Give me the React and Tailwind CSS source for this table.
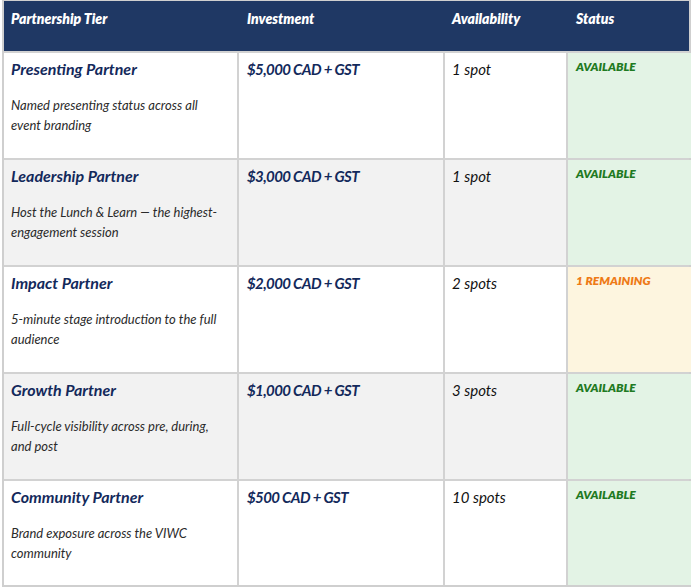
import React from 'react'

const rows = [
  { tier: 'Presenting Partner', desc: ['Named presenting status across all', 'event branding'], price: '$5,000 CAD + GST', spots: '1 spot', status: 'AVAILABLE', tone: 'green' },
  { tier: 'Leadership Partner', desc: ['Host the Lunch & Learn — the highest-', 'engagement session'], price: '$3,000 CAD + GST', spots: '1 spot', status: 'AVAILABLE', tone: 'green' },
  { tier: 'Impact Partner', desc: ['5-minute stage introduction to the full', 'audience'], price: '$2,000 CAD + GST', spots: '2 spots', status: '1 REMAINING', tone: 'amber' },
  { tier: 'Growth Partner', desc: ['Full-cycle visibility across pre, during,', 'and post'], price: '$1,000 CAD + GST', spots: '3 spots', status: 'AVAILABLE', tone: 'green' },
  { tier: 'Community Partner', desc: ['Brand exposure across the VIWC', 'community'], price: '$500 CAD + GST', spots: '10 spots', status: 'AVAILABLE', tone: 'green' },
]

const cols = 'grid grid-cols-[235px_206px_123px_123px]'

export default function App() {
  return (
    <div className="w-[693px] h-[587px] bg-white pl-[2px] font-['Lato',sans-serif] italic">
      <div className="w-[689px] border-2 border-[#cfcfcf] border-t-[1px]">
        <div className={`${cols} h-[50px] bg-[#1f3864] text-white font-extrabold text-[14px]`}>
          <div className="pl-[7px] pt-[7px]">Partnership Tier</div>
          <div className="pl-[8px] pt-[7px]">Investment</div>
          <div className="pl-[7px] pt-[7px]">Availability</div>
          <div className="pl-[8px] pt-[7px]">Status</div>
        </div>
        {rows.map((r, i) => (
          <div key={r.tier} className={`${cols} ${i === 4 ? 'h-[106px]' : 'h-[107px]'} border-t-2 border-[#d2d2d2] ${i % 2 ? 'bg-[#f2f2f2]' : 'bg-white'}`}>
            <div className="pl-[7px] pt-[6px] border-r-2 border-[#d2d2d2]">
              <div className="text-[16px] font-bold text-[#13295b] leading-[20px]">{r.tier}</div>
              <div className="mt-[16px] text-[13px] text-[#2b2b2b] leading-[20px] whitespace-nowrap">
                {r.desc.map((l) => <div key={l}>{l}</div>)}
              </div>
            </div>
            <div className="pl-[8px] pt-[6px] border-r-2 border-[#d2d2d2] text-[15px] tracking-[-0.6px] font-bold text-[#13295b] leading-[20px]">{r.price}</div>
            <div className="pl-[7px] pt-[6px] border-r-2 border-[#d2d2d2] text-[15px] text-[#111] leading-[20px]">{r.spots}</div>
            <div className={`pl-[8px] pt-[6px] text-[12px] font-extrabold leading-[16px] ${r.tone === 'amber' ? 'bg-[#fdf5df] text-[#ee7a16]' : 'bg-[#e3f3e5] text-[#1f7a22]'}`}>{r.status}</div>
          </div>
        ))}
      </div>
    </div>
  )
}
